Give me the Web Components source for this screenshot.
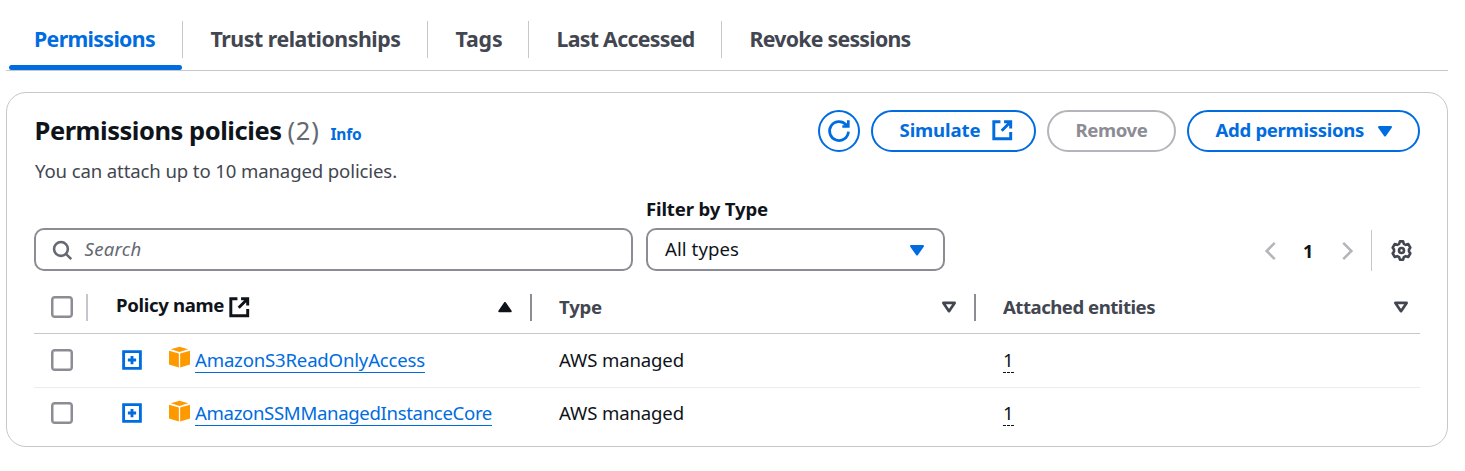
<!DOCTYPE html>
<html lang="en">
<head>
<meta charset="utf-8">
<title>Permissions</title>
<style>
html,body{margin:0;background:#fff}
body{font-family:"Noto Sans","Open Sans",sans-serif;font-size:18.6px;line-height:24px;color:#0f141a}
</style>
</head>
<body>
<role-page></role-page>
<script>
const define = (name, html, ready) => customElements.define(name, class extends HTMLElement {
  connectedCallback() {
    if (this.shadowRoot) return;
    const t = document.createElement('template');
    t.innerHTML = html;
    this.attachShadow({ mode: 'open' }).append(t.content.cloneNode(true));
    if (ready) ready(this, this.shadowRoot);
  }
});

/* Text tracked to fill the advance width given in "w". */
define('ui-text', `<style>:host{display:inline-block;white-space:pre;flex:none}span{display:inline-block}</style><span><slot></slot></span>`, (el, root) => {
  const w = +el.getAttribute('w'), span = root.querySelector('span');
  if (!w) return;
  el.style.width = w + 'px';
  span.style.letterSpacing = (w - span.getBoundingClientRect().width) / el.textContent.length + 'px';
});

const icons = {
  refresh: '<path d="M14.3 8.4A6.3 6.3 0 1 1 12.6 3.7L13.6 4.8M14.2 0.8V5H10.2" stroke-width="1.8"/>',
  external: '<path d="M6.7 2H2V14H14V9.3M9.3 2H14V6.7M14 2L7.6 8.4" stroke-width="2.1"/>',
  down: '<path d="M2.8 4.5H13.2L8 11.8Z" fill="currentColor" stroke-width="2" stroke-linejoin="round"/>',
  up: '<path d="M2.8 11.8H13.2L8 4.3Z" fill="currentColor" stroke-width="1.6" stroke-linejoin="round"/>',
  filter: '<path d="M3 4.4H13L8 11.7Z" stroke-width="2.4" stroke-linejoin="round"/>',
  search: '<circle cx="7" cy="7" r="5.4" stroke-width="2"/><path d="M10.9 10.9L15 15" stroke-width="2"/>',
  left: '<path d="M11 1.5L4.5 8L11 14.5" stroke-width="2"/>',
  right: '<path d="M5 1.5L11.5 8L5 14.5" stroke-width="2"/>',
  plus: '<path d="M1.3 1.3H14.7V14.7H1.3ZM8 4.7V11.3M4.7 8H11.3" stroke-width="2.3"/>',
  gear: '<path d="M6.8 1H9.2L9.8 3L11.2 3.7L13.2 3.1L14.7 5.8L13.7 7.2V8.8L14.7 10.2L13.2 12.9L11.2 12.3L9.8 13L9.2 15H6.8L6.2 13L4.8 12.3L2.8 12.9L1.3 10.2L2.3 8.8V7.2L1.3 5.8L2.8 3.1L4.8 3.7L6.2 3Z" stroke-width="2" stroke-linejoin="round"/><circle cx="8" cy="8" r="1.9" stroke-width="2"/>',
  cube: '<g fill="#ff9900" stroke="none"><path d="M8 -0.2L14.6 1.8L8 3.9L1.4 1.8Z"/><path d="M0 2.9L7.5 5V15.6L0 13.3Z"/><path d="M16 2.9L8.5 5V15.6L16 13.3Z"/></g>'
};
define('ui-icon', `<style>:host{display:block;flex:none}svg{display:block;width:100%;height:100%;overflow:visible}</style><svg viewBox="0 0 16 16" fill="none" stroke="currentColor" stroke-linejoin="miter"></svg>`, (el, root) => {
  const s = el.getAttribute('size') || 20;
  el.style.width = el.style.height = s + 'px';
  root.querySelector('svg').innerHTML = icons[el.getAttribute('name')];
});

define('ui-tab', `<style>
:host{display:flex;flex:none;box-sizing:border-box;height:70px;padding-left:28px;flex-direction:column;font-size:21.3px;line-height:36px;font-weight:700;color:#424650}
:host([active]){padding-left:26px;color:#006ce0}
.label{margin:21px 0 8px -28px;padding-left:27.5px;border-right:1px solid #c6c6cd;height:37px}
:host([active]) .label{margin-left:-26px;padding-left:25px}
:host([last]) .label{border:0}
.bar{height:5px;background:#006ce0;border-radius:3px;margin:-1px 1px 0 -26px;display:none}
:host([active]) .bar{display:block}
</style><div class="label"><slot></slot></div><div class="bar"></div>`);

define('ui-tabs', `<style>:host{display:block;height:70px;border-bottom:1px solid #c6c6cd}nav{display:flex;padding-left:3px}
#a{width:174px}#b{width:245px}#c{width:101px}#d{width:193px}#e{width:220px}</style>
<nav>
<ui-tab id="a" active><ui-text w="121">Permissions</ui-text></ui-tab>
<ui-tab id="b"><ui-text w="190">Trust relationships</ui-text></ui-tab>
<ui-tab id="c"><ui-text w="47">Tags</ui-text></ui-tab>
<ui-tab id="d"><ui-text w="138">Last Accessed</ui-text></ui-tab>
<ui-tab id="e" last><ui-text w="161">Revoke sessions</ui-text></ui-tab>
</nav>`);

define('ui-button', `<style>
:host{display:flex;align-items:center;box-sizing:border-box;height:42px;border:2px solid #006ce0;border-radius:21px;color:#006ce0;font-weight:700;padding:0 0 1px 26.5px;gap:10px;flex:none}
:host([round]){width:42px;padding:0;justify-content:center}
:host([disabled]){border-color:#b4b4bb;color:#8c8c94}
::slotted(ui-text){margin-top:-1px}
</style><slot></slot>`);

define('ui-checkbox', `<style>:host{display:block;flex:none;box-sizing:border-box;width:22px;height:22px;border:2px solid #8c8c94;border-radius:4px;box-shadow:inset 0 0 0 .5px #8c8c94}</style>`);

define('panel-header', `<style>
:host{display:flex;justify-content:space-between;height:102px}
.title{display:flex;align-items:baseline;height:42px;line-height:40px;font-size:25.5px;font-weight:700;margin-left:.5px}
.count{color:#656871;font-weight:400;margin-left:6px}
.info{color:#006ce0;font-size:15.5px;margin-left:11px}
.desc{color:#424650;margin:7px 0 0 1px}
.actions{display:flex;gap:11px}
</style>
<div><div class="title"><ui-text w="247">Permissions policies</ui-text><ui-text class="count" w="32">(2)</ui-text><ui-text class="info" w="31">Info</ui-text></div>
<div class="desc"><ui-text w="362">You can attach up to 10 managed policies.</ui-text></div></div>
<div class="actions">
<ui-button round><ui-icon name="refresh" size="24"></ui-icon></ui-button>
<ui-button style="width:165px"><ui-text w="81">Simulate</ui-text><ui-icon name="external" size="22.5"></ui-icon></ui-button>
<ui-button disabled style="width:129px"><ui-text w="72">Remove</ui-text></ui-button>
<ui-button style="width:233px"><ui-text w="148.5">Add permissions</ui-text><ui-icon name="down" size="18" style="margin-left:2px"></ui-icon></ui-button>
</div>`);

define('policy-filters', `<style>
:host{display:flex;height:76px;align-items:flex-end;box-sizing:border-box;margin-top:-17px}
.box{box-sizing:border-box;height:43px;border:2px solid #8c8c94;border-radius:10px;display:flex;align-items:center}
.box ui-text{margin-top:-1px}
.search{width:599px;padding-left:16px;gap:12px;font-style:italic;color:#656871}
.search ui-icon{margin-top:2px}
.col{margin-left:13px;width:299px}
.label{font-weight:700;margin-bottom:7px}
.select{padding:0 17px 0 17px;justify-content:space-between}
.select ui-icon{color:#006ce0}
.pages{margin-left:auto;display:flex;align-items:center;height:41px;color:#b4b4bb}
.pages ui-text{color:#0f141a;font-weight:700;font-size:18px;margin:0 24px 0 22.5px}
.sep{width:1px;height:41px;background:#c6c6cd;margin:0 19px 0 14px}
.gear{color:#424650;margin-right:8px}
</style>
<div class="box search"><ui-icon name="search" size="20.5"></ui-icon><ui-text w="57">Search</ui-text></div>
<div class="col"><div class="label"><ui-text w="122">Filter by Type</ui-text></div>
<div class="box select"><ui-text w="74">All types</ui-text><ui-icon name="down" size="18"></ui-icon></div></div>
<div class="pages"><ui-icon name="left" size="20"></ui-icon><ui-text w="10">1</ui-text><ui-icon name="right" size="20"></ui-icon><div class="sep"></div><ui-icon class="gear" name="gear" size="21"></ui-icon></div>`);

define('table-head', `<style>
:host{display:grid;grid-template-columns:54px 444px 444px 444px;height:52px;border-bottom:1px solid #c6c6cd;align-items:center;font-weight:700;color:#424650;margin-top:10px}
div{display:flex;align-items:center;height:27px;box-sizing:border-box;border-right:2px solid #8c8c94}
.sel{padding-left:17px;border-color:#c6c6cd}
.name{padding-left:28px;padding-right:16px;color:#0f141a}
.name ui-text{margin-top:-4px}
.name .ext{margin-left:4px}
.cell{padding:0 16px 0 27px}
.last{border:0;padding-right:10px}
.end{margin-left:auto}
</style>
<div class="sel"><ui-checkbox></ui-checkbox></div>
<div class="name"><ui-text w="108">Policy name</ui-text><ui-icon class="ext" name="external" size="22.5"></ui-icon><ui-icon class="end" name="up" size="18"></ui-icon></div>
<div class="cell"><ui-text w="43">Type</ui-text><ui-icon class="end" name="filter" size="18"></ui-icon></div>
<div class="cell last"><ui-text w="152">Attached entities</ui-text><ui-icon class="end" name="filter" size="18"></ui-icon></div>`);

define('policy-row', `<style>
:host{display:grid;grid-template-columns:88px 437px 444px 1fr;align-items:center;border-bottom:1px solid #ebebf0;box-sizing:border-box;height:54px;padding-bottom:2px}
:host([last]){border:0;height:51px;padding-bottom:1px}
ui-checkbox{margin-left:17px}
:host([last]) ui-checkbox{margin-bottom:1px}
.name{display:flex;align-items:center}
.plus{color:#006ce0;margin-top:1px}
:host([last]) .plus{margin-top:0}
.cube{margin:-4px 5px 0 27px}
.link{color:#006ce0;border-bottom:1px solid #006ce0;height:24px;margin-top:1px}
.count{border-bottom:1px dashed #0f141a;height:24px;justify-self:start}
:host(:not([last])) .count{margin-top:1px}
</style>
<ui-checkbox></ui-checkbox>
<div class="name"><ui-icon class="plus" name="plus" size="20"></ui-icon><ui-icon class="cube" name="cube" size="21"></ui-icon><span class="link"></span></div>
<ui-text w="125">AWS managed</ui-text>
<ui-text class="count" w="11">1</ui-text>`, (el, root) => {
  const t = document.createElement('ui-text');
  t.textContent = el.getAttribute('name');
  t.setAttribute('w', el.getAttribute('w'));
  root.querySelector('.link').append(t);
});

define('policies-panel', `<style>:host{display:block;box-sizing:border-box;width:1442px;height:355px;margin-top:21px;border:1px solid #c6c6cd;border-radius:20px;padding:17px 27px 0}</style>
<panel-header></panel-header><policy-filters></policy-filters><table-head></table-head>
<policy-row name="AmazonS3ReadOnlyAccess" w="230"></policy-row>
<policy-row last name="AmazonSSMManagedInstanceCore" w="297"></policy-row>`);

define('role-page', `<style>:host{display:block;width:1442px;height:471px;margin-left:6px;overflow:hidden}</style><ui-tabs></ui-tabs><policies-panel></policies-panel>`);
</script>
</body>
</html>
